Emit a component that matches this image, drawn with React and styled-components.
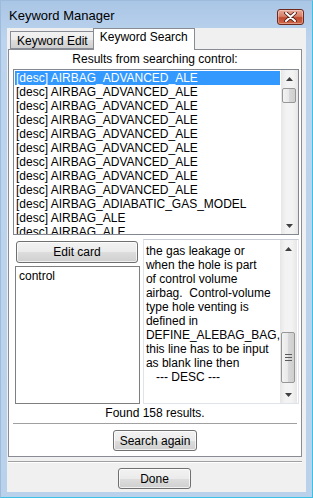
import React from "react";
import styled, { createGlobalStyle } from "styled-components";

const GlobalStyle = createGlobalStyle`
  html, body {
    margin: 0;
    padding: 0;
    background: #bcd4ee;
  }
  body {
    font-family: "Liberation Sans", Arial, sans-serif;
    font-size: 12px;
    color: #000;
  }
`;

const results = [
  "AIRBAG_ADVANCED_ALE",
  "AIRBAG_ADVANCED_ALE",
  "AIRBAG_ADVANCED_ALE",
  "AIRBAG_ADVANCED_ALE",
  "AIRBAG_ADVANCED_ALE",
  "AIRBAG_ADVANCED_ALE",
  "AIRBAG_ADVANCED_ALE",
  "AIRBAG_ADVANCED_ALE",
  "AIRBAG_ADVANCED_ALE",
  "AIRBAG_ADIABATIC_GAS_MODEL",
  "AIRBAG_ALE",
  "AIRBAG_ALE",
];

const descLines = [
  "the gas leakage or",
  "when the hole is part",
  "of control volume",
  "airbag.\u00a0 Control-volume",
  "type hole venting is",
  "defined in",
  "DEFINE_ALEBAG_BAG,",
  "this line has to be input",
  "as blank line then",
  "\u00a0\u00a0 --- DESC ---",
];

const ScrollBar = ({ thumbTop, thumbHeight, grip }) => (
  <Track>
    <Arrow>
      <svg width="7" height="4" viewBox="0 0 7 4">
        <path d="M0 4 L3.5 0 L7 4 Z" fill="#404040" />
      </svg>
    </Arrow>
    <ThumbArea>
      <Thumb style={{ top: thumbTop, height: thumbHeight }}>
        {grip && (
          <svg width="7" height="7" viewBox="0 0 7 7">
            <path d="M0 0.5 H7 M0 3.5 H7 M0 6.5 H7" stroke="#5a5a5a" strokeWidth="1" />
          </svg>
        )}
      </Thumb>
    </ThumbArea>
    <Arrow>
      <svg width="7" height="4" viewBox="0 0 7 4">
        <path d="M0 0 L7 0 L3.5 4 Z" fill="#404040" />
      </svg>
    </Arrow>
  </Track>
);

export default function App() {
  return (
    <>
      <GlobalStyle />
      <Window>
        <TitleBar>
          <Title>Keyword Manager</Title>
          <CloseButton>
            <svg width="13" height="10" viewBox="0 0 13 10">
              <path
                d="M2 1 L11 9 M11 1 L2 9"
                stroke="#4a1a10"
                strokeWidth="3.6"
                strokeLinecap="round"
              />
              <path
                d="M2 1 L11 9 M11 1 L2 9"
                stroke="#ffffff"
                strokeWidth="2"
                strokeLinecap="round"
              />
            </svg>
          </CloseButton>
        </TitleBar>
        <Client>
          <TabStrip>
            <Tab>Keyword Edit</Tab>
            <Tab active>Keyword Search</Tab>
          </TabStrip>
          <Panel>
            <Caption>Results from searching control:</Caption>
            <ListBox>
              <ListItems>
                {results.map((r, i) => (
                  <Row key={i} selected={i === 0}>
                    [desc] {r}
                  </Row>
                ))}
              </ListItems>
              <ScrollBar thumbTop={1} thumbHeight={15} />
            </ListBox>
            <Lower>
              <LeftCol>
                <Button wide>Edit card</Button>
                <KeyBox>control</KeyBox>
              </LeftCol>
              <DescBox>
                <DescText>
                  {descLines.map((l, i) => (
                    <div key={i}>{l}</div>
                  ))}
                </DescText>
                <ScrollBar thumbTop={75} thumbHeight={51} grip />
              </DescBox>
            </Lower>
            <Status>Found 158 results.</Status>
            <Rule />
            <ButtonRow>
              <Button width={84}>Search again</Button>
            </ButtonRow>
          </Panel>
          <Separator />
          <Footer>
            <Button width={73}>Done</Button>
          </Footer>
        </Client>
      </Window>
    </>
  );
}

const Window = styled.div`
  width: 313px;
  height: 498px;
  box-sizing: border-box;
  display: flex;
  flex-direction: column;
  padding: 0 6px 5px 6px;
  background: linear-gradient(to bottom, #aac6e6 0px, #bcd4ee 40px, #b9d1ea 100%);
  border-right: 1px solid #3cc0e4;
  border-bottom: 1px solid #3cc0e4;
  border-left: 1px solid #9fbbdc;
  border-top: 1px solid #9fbbdc;
`;

const TitleBar = styled.div`
  height: 27px;
  display: flex;
  align-items: flex-start;
  justify-content: space-between;
`;

const Title = styled.div`
  font-size: 13px;
  margin-top: 7px;
  margin-left: 2px;
  color: #000;
`;

const CloseButton = styled.div`
  width: 27px;
  height: 16px;
  margin-top: 8px;
  margin-right: 2px;
  box-sizing: border-box;
  display: flex;
  align-items: center;
  justify-content: center;
  border: 1px solid #6d2a1c;
  border-radius: 3px;
  background: linear-gradient(to bottom, #e8a898 0%, #d88068 45%, #c04a30 55%, #d06848 100%);
  box-shadow: inset 0 0 0 1px rgba(255, 255, 255, 0.35);
`;

const Client = styled.div`
  flex: 1;
  background: #f0f0f0;
  display: flex;
  flex-direction: column;
  padding: 0 4px 0 1px;
`;

const TabStrip = styled.div`
  height: 21px;
  display: flex;
  align-items: flex-end;
  padding-left: 2px;
  position: relative;
  z-index: 1;
`;

const Tab = styled.div`
  box-sizing: border-box;
  height: ${(p) => (p.active ? "22px" : "18px")};
  margin-bottom: ${(p) => (p.active ? "-1px" : "0")};
  padding: ${(p) => (p.active ? "1px 6px 0 6px" : "2px 5px 0 6px")};
  border: 1px solid #898c95;
  border-bottom: ${(p) => (p.active ? "none" : "1px solid #898c95")};
  margin-left: ${(p) => (p.active ? "-1px" : "0")};
  background: ${(p) =>
    p.active ? "#ffffff" : "linear-gradient(to bottom, #f2f2f2 0%, #ebebeb 50%, #dddddd 51%, #cfcfcf 100%)"};
  font-size: 12px;
  white-space: nowrap;
`;

const Panel = styled.div`
  height: 408px;
  box-sizing: border-box;
  border: 1px solid #898c95;
  background: #ffffff;
  display: flex;
  flex-direction: column;
  padding: 0 2px 0 4px;
`;

const Caption = styled.div`
  text-align: center;
  height: 19px;
  line-height: 19px;
  padding-right: 2px;
`;

const ListBox = styled.div`
  height: 166px;
  box-sizing: border-box;
  border: 1px solid #828790;
  display: flex;
  overflow: hidden;
`;

const ListItems = styled.div`
  flex: 1;
  padding: 1px;
  overflow: hidden;
`;

const Row = styled.div`
  height: 14px;
  line-height: 14px;
  padding-left: 1px;
  white-space: nowrap;
  background: ${(p) => (p.selected ? "#3399ff" : "transparent")};
  color: ${(p) => (p.selected ? "#ffffff" : "#000000")};
`;

const Track = styled.div`
  width: 17px;
  flex-shrink: 0;
  display: flex;
  flex-direction: column;
  background: linear-gradient(to right, #e6e6e6, #f3f3f3 30%, #f3f3f3 70%, #e6e6e6);
`;

const Arrow = styled.div`
  height: 17px;
  display: flex;
  align-items: center;
  justify-content: center;
`;

const ThumbArea = styled.div`
  flex: 1;
  position: relative;
`;

const Thumb = styled.div`
  position: absolute;
  left: 1px;
  right: 2px;
  box-sizing: border-box;
  border: 1px solid #979797;
  border-radius: 2px;
  background: linear-gradient(to right, #f3f3f3 0%, #e8e8e8 50%, #d8d8d8 51%, #cfcfcf 100%);
  display: flex;
  align-items: center;
  justify-content: center;
`;

const Lower = styled.div`
  display: flex;
  gap: 3px;
  margin-top: 4px;
  padding-left: 2px;
  height: 165px;
`;

const LeftCol = styled.div`
  width: 128px;
  display: flex;
  flex-direction: column;
  align-items: stretch;
  gap: 3px;
  padding-top: 2px;
`;

const Button = styled.div`
  box-sizing: border-box;
  width: ${(p) => (p.wide ? "auto" : `${p.width}px`)};
  margin: ${(p) => (p.wide ? "0 2px 0 1px" : "0")};
  height: ${(p) => (p.wide ? "22px" : "21px")};
  display: flex;
  align-items: center;
  justify-content: center;
  border: 1px solid #707070;
  border-radius: 3px;
  background: linear-gradient(to bottom, #f2f2f2 0%, #ebebeb 50%, #dddddd 51%, #cfcfcf 100%);
  box-shadow: inset 0 0 0 1px rgba(255, 255, 255, 0.7);
  font-size: 12px;
`;

const KeyBox = styled.div`
  flex: 1;
  box-sizing: border-box;
  border: 1px solid #7f7f7f;
  padding: 2px 3px;
  line-height: 14px;
`;

const DescBox = styled.div`
  flex: 1;
  box-sizing: border-box;
  border: 1px solid #dfe3ea;
  border-top-color: #c8ccd4;
  display: flex;
  padding: 0 1px 0 0;
`;

const DescText = styled.div`
  flex: 1;
  padding: 4px 0 0 2px;
  line-height: 14px;
  white-space: nowrap;
  overflow: hidden;
`;

const Status = styled.div`
  text-align: center;
  height: 19px;
  line-height: 19px;
  padding-right: 2px;
`;

const Rule = styled.div`
  height: 1px;
  background: #a0a0a0;
  margin: 0 2px 0 0;
`;

const ButtonRow = styled.div`
  display: flex;
  justify-content: center;
  padding: 6px 0 0 0;
  padding-right: 2px;
`;

const Separator = styled.div`
  height: 1px;
  margin-top: 4px;
  background: #a0a0a0;
  border-bottom: 1px solid #ffffff;
`;

const Footer = styled.div`
  display: flex;
  justify-content: center;
  padding-top: 5px;
  padding-right: 1px;
`;
